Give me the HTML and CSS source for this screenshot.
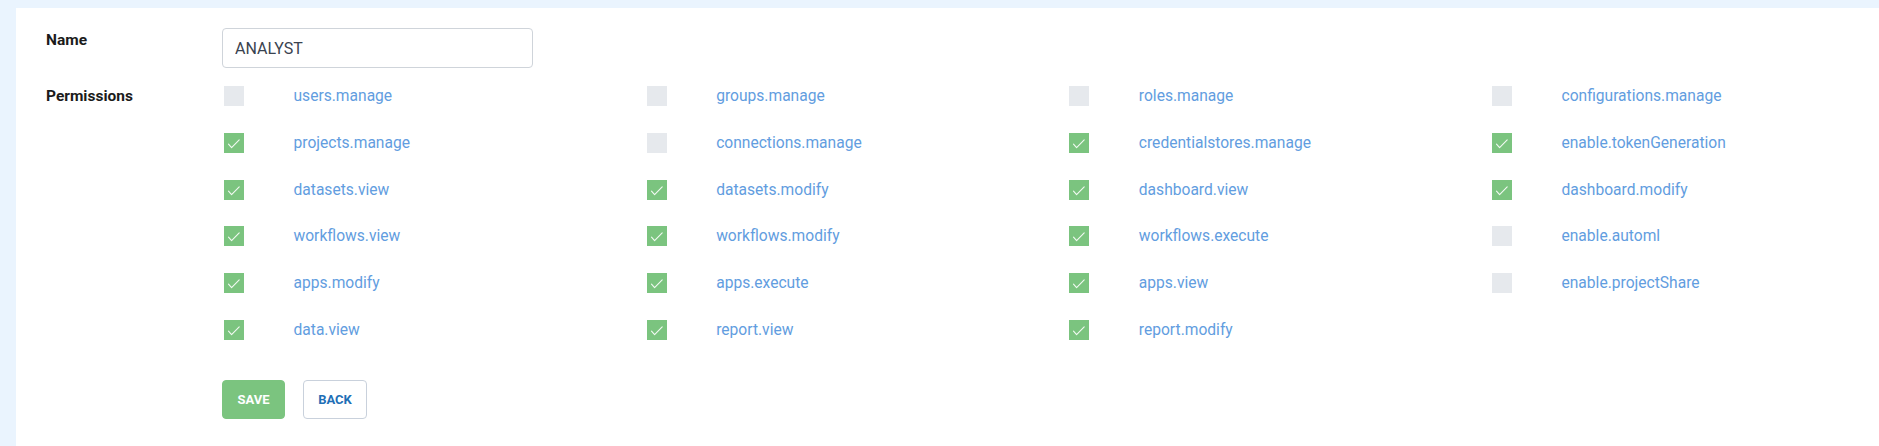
FILE: index.html
```html
<!DOCTYPE html>
<html lang="en">
<head>
<meta charset="utf-8">
<title>Role</title>
<link rel="stylesheet" href="styles.css">
</head>
<body>
<div class="panel">
  <div class="field">
    <label class="field-label" for="role-name">Name</label>
    <div class="field-control">
      <input id="role-name" class="text-input" type="text" value="ANALYST">
    </div>
  </div>
  <div class="field field-perms">
    <div class="field-label">Permissions</div>
    <div class="perm-grid">
      <div class="perm"><span class="cb"></span><span class="perm-name">users.manage</span></div>
      <div class="perm"><span class="cb"></span><span class="perm-name">groups.manage</span></div>
      <div class="perm"><span class="cb"></span><span class="perm-name">roles.manage</span></div>
      <div class="perm"><span class="cb"></span><span class="perm-name">configurations.manage</span></div>

      <div class="perm"><span class="cb on"><svg viewBox="0 0 20 20"><path d="M4.5 11.2 L7.6 14.6 L15.2 6.8"/></svg></span><span class="perm-name">projects.manage</span></div>
      <div class="perm"><span class="cb"></span><span class="perm-name">connections.manage</span></div>
      <div class="perm"><span class="cb on"><svg viewBox="0 0 20 20"><path d="M4.5 11.2 L7.6 14.6 L15.2 6.8"/></svg></span><span class="perm-name">credentialstores.manage</span></div>
      <div class="perm"><span class="cb on"><svg viewBox="0 0 20 20"><path d="M4.5 11.2 L7.6 14.6 L15.2 6.8"/></svg></span><span class="perm-name">enable.tokenGeneration</span></div>

      <div class="perm"><span class="cb on"><svg viewBox="0 0 20 20"><path d="M4.5 11.2 L7.6 14.6 L15.2 6.8"/></svg></span><span class="perm-name">datasets.view</span></div>
      <div class="perm"><span class="cb on"><svg viewBox="0 0 20 20"><path d="M4.5 11.2 L7.6 14.6 L15.2 6.8"/></svg></span><span class="perm-name">datasets.modify</span></div>
      <div class="perm"><span class="cb on"><svg viewBox="0 0 20 20"><path d="M4.5 11.2 L7.6 14.6 L15.2 6.8"/></svg></span><span class="perm-name">dashboard.view</span></div>
      <div class="perm"><span class="cb on"><svg viewBox="0 0 20 20"><path d="M4.5 11.2 L7.6 14.6 L15.2 6.8"/></svg></span><span class="perm-name">dashboard.modify</span></div>

      <div class="perm"><span class="cb on"><svg viewBox="0 0 20 20"><path d="M4.5 11.2 L7.6 14.6 L15.2 6.8"/></svg></span><span class="perm-name">workflows.view</span></div>
      <div class="perm"><span class="cb on"><svg viewBox="0 0 20 20"><path d="M4.5 11.2 L7.6 14.6 L15.2 6.8"/></svg></span><span class="perm-name">workflows.modify</span></div>
      <div class="perm"><span class="cb on"><svg viewBox="0 0 20 20"><path d="M4.5 11.2 L7.6 14.6 L15.2 6.8"/></svg></span><span class="perm-name">workflows.execute</span></div>
      <div class="perm"><span class="cb"></span><span class="perm-name">enable.automl</span></div>

      <div class="perm"><span class="cb on"><svg viewBox="0 0 20 20"><path d="M4.5 11.2 L7.6 14.6 L15.2 6.8"/></svg></span><span class="perm-name">apps.modify</span></div>
      <div class="perm"><span class="cb on"><svg viewBox="0 0 20 20"><path d="M4.5 11.2 L7.6 14.6 L15.2 6.8"/></svg></span><span class="perm-name">apps.execute</span></div>
      <div class="perm"><span class="cb on"><svg viewBox="0 0 20 20"><path d="M4.5 11.2 L7.6 14.6 L15.2 6.8"/></svg></span><span class="perm-name">apps.view</span></div>
      <div class="perm"><span class="cb"></span><span class="perm-name">enable.projectShare</span></div>

      <div class="perm"><span class="cb on"><svg viewBox="0 0 20 20"><path d="M4.5 11.2 L7.6 14.6 L15.2 6.8"/></svg></span><span class="perm-name">data.view</span></div>
      <div class="perm"><span class="cb on"><svg viewBox="0 0 20 20"><path d="M4.5 11.2 L7.6 14.6 L15.2 6.8"/></svg></span><span class="perm-name">report.view</span></div>
      <div class="perm"><span class="cb on"><svg viewBox="0 0 20 20"><path d="M4.5 11.2 L7.6 14.6 L15.2 6.8"/></svg></span><span class="perm-name">report.modify</span></div>
    </div>
  </div>
  <div class="actions">
    <button class="btn btn-save" type="button">SAVE</button>
    <button class="btn btn-back" type="button">BACK</button>
  </div>
</div>
</body>
</html>
```

FILE: styles.css
```css
html, body {
  margin: 0;
  padding: 0;
  background: #eaf4fe;
  overflow: hidden;
}

body {
  font-family: Roboto, "Liberation Sans", Arial, sans-serif;
  font-size: 15px;
  color: #222;
}

.panel {
  margin: 8px 0 0 16px;
  height: 438px;
  background: #ffffff;
  padding: 20px 0 0 30px;
  box-sizing: border-box;
}

.field {
  display: grid;
  grid-template-columns: 176px 1fr;
  align-items: start;
}

.field-label {
  font-weight: 700;
  font-size: 15.5px;
  line-height: 20px;
  color: #1b1b1b;
  padding-top: 2px;
}

.field-perms {
  margin-top: 18px;
}

.field-perms .field-label {
  padding-top: 0;
}

.text-input {
  display: block;
  width: 311px;
  height: 40px;
  box-sizing: border-box;
  border: 1px solid #cfd4da;
  border-radius: 4px;
  padding: 0 12px;
  font-family: Roboto, "Liberation Sans", Arial, sans-serif;
  font-size: 16px;
  color: #3a4350;
  background: #fff;
  outline: none;
}

.perm-grid {
  display: grid;
  grid-template-columns: repeat(3, 422.67px) 1fr;
  grid-auto-rows: 20px;
  row-gap: 26.8px;
}

.perm {
  display: flex;
  align-items: center;
  height: 20px;
}

.cb {
  flex: none;
  width: 20px;
  height: 20px;
  margin-left: 2px;
  background: #e6e9ed;
  display: flex;
}

.cb.on {
  background: #7bc47f;
}

.cb svg {
  width: 20px;
  height: 20px;
}

.cb path {
  fill: none;
  stroke: rgba(255, 255, 255, 0.9);
  stroke-width: 1.1;
  stroke-linecap: round;
  stroke-linejoin: round;
}

.perm-name {
  margin-left: 49.5px;
  font-size: 15.6px;
  line-height: 20px;
  color: #629de0;
  white-space: nowrap;
}

.actions {
  display: flex;
  gap: 18px;
  margin-top: 40px;
  padding-left: 176px;
}

.btn {
  height: 39px;
  padding: 0 14px;
  border-radius: 4px;
  font-family: Roboto, "Liberation Sans", Arial, sans-serif;
  font-size: 13px;
  font-weight: 700;
  cursor: pointer;
  box-sizing: border-box;
}

.btn-save {
  width: 63px;
  background: #7bc47f;
  border: 1px solid #7bc47f;
  color: #ffffff;
}

.btn-back {
  width: 64px;
  background: #ffffff;
  border: 1px solid #c9d1dc;
  color: #1f6fb6;
}
```
